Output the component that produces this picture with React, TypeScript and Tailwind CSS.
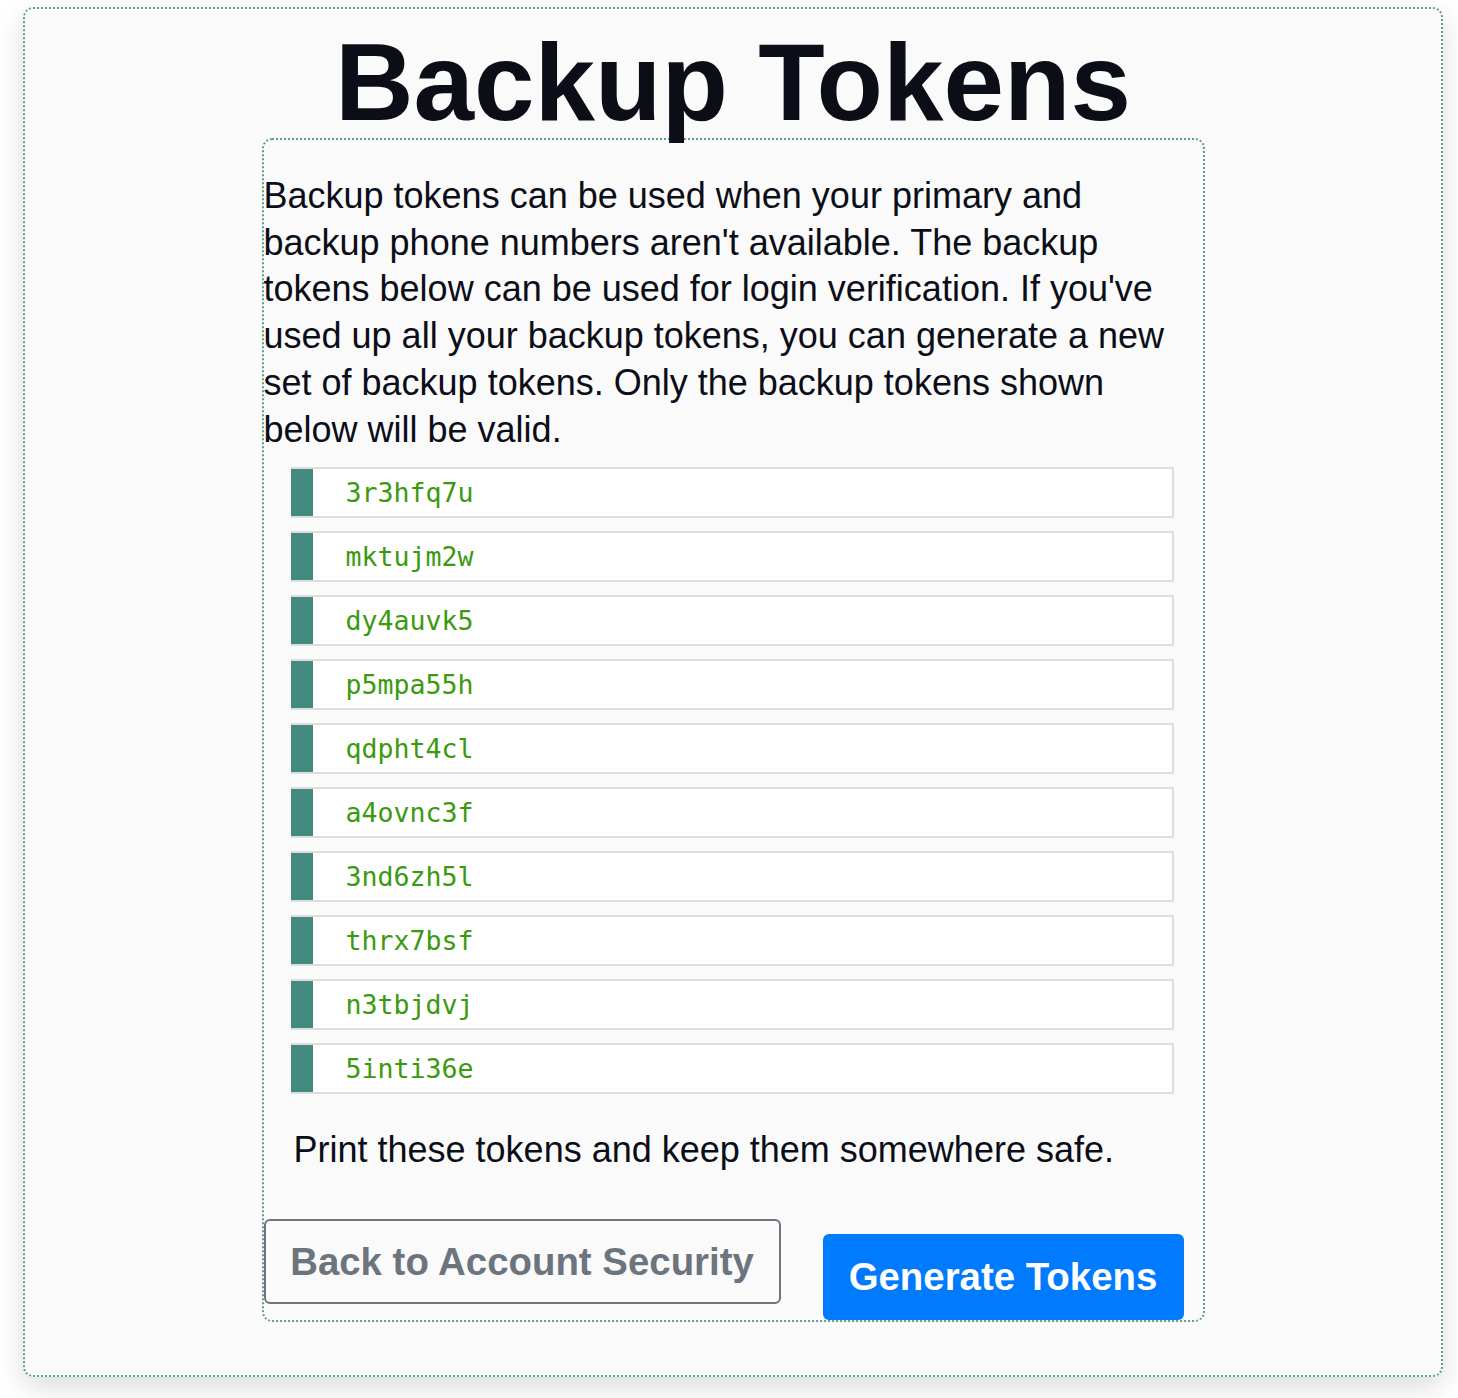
import React from "react";

const tokens = [
  "3r3hfq7u",
  "mktujm2w",
  "dy4auvk5",
  "p5mpa55h",
  "qdpht4cl",
  "a4ovnc3f",
  "3nd6zh5l",
  "thrx7bsf",
  "n3tbjdvj",
  "5inti36e",
];

const sans = '"Liberation Sans", Arial, sans-serif';

export default function App() {
  return (
    <div className="min-h-[1398px] bg-white pt-[7px] pl-[23px]">
      <div className="w-[1420px] h-[1370px] rounded-[10px] border-2 border-dotted border-[#5a9e8e] bg-[#fafafa] shadow-[0_10px_28px_rgba(0,0,0,0.14)] pt-[20px]">
        <h1
          className="text-center font-bold text-[#0b0e17] text-[108.8px] leading-[108px] mb-[1px]"
          style={{ fontFamily: sans }}
        >
          Backup Tokens
        </h1>
        <div
          className="mx-auto w-[943px] h-[1184px] rounded-[10px] border-2 border-dotted border-[#5a9e8e] pt-[33px] text-[#0b0e17]"
          style={{ fontFamily: sans }}
        >
          <p className="text-[36px] leading-[46.7px]">
            Backup tokens can be used when your primary and backup phone numbers aren't available. The backup tokens below can be used for login verification. If you've used up all your backup tokens, you can generate a new set of backup tokens. Only the backup tokens shown below will be valid.
          </p>
          <ul className="mt-[14px] ml-[27px] mr-[29px] flex flex-col gap-[13px]">
            {tokens.map((t) => (
              <li
                key={t}
                className="h-[51px] flex items-stretch border-2 border-l-0 border-[#dddddd] bg-white"
              >
                <div className="w-[22px] bg-[#428a7e]" />
                <div
                  className="flex items-center pl-[33px] text-[26.6px] text-[#3a9a0e]"
                  style={{ fontFamily: '"DejaVu Sans Mono", monospace' }}
                >
                  {t}
                </div>
              </li>
            ))}
          </ul>
          <p className="mt-[33px] ml-[30px] text-[36px] leading-[46.7px]">
            Print these tokens and keep them somewhere safe.
          </p>
          <div
            className="mt-[45px] flex items-start gap-[42px] font-bold text-[38.4px]"
            style={{ fontFamily: sans }}
          >
            <button className="h-[85px] w-[517px] rounded-[6px] border-2 border-[#6c757d] text-[#6c757d] flex items-center justify-center">
              Back to Account Security
            </button>
            <button className="mt-[15px] h-[86px] w-[361px] rounded-[6px] bg-[#007bff] text-white flex items-center justify-center">
              Generate Tokens
            </button>
          </div>
        </div>
      </div>
    </div>
  );
}
